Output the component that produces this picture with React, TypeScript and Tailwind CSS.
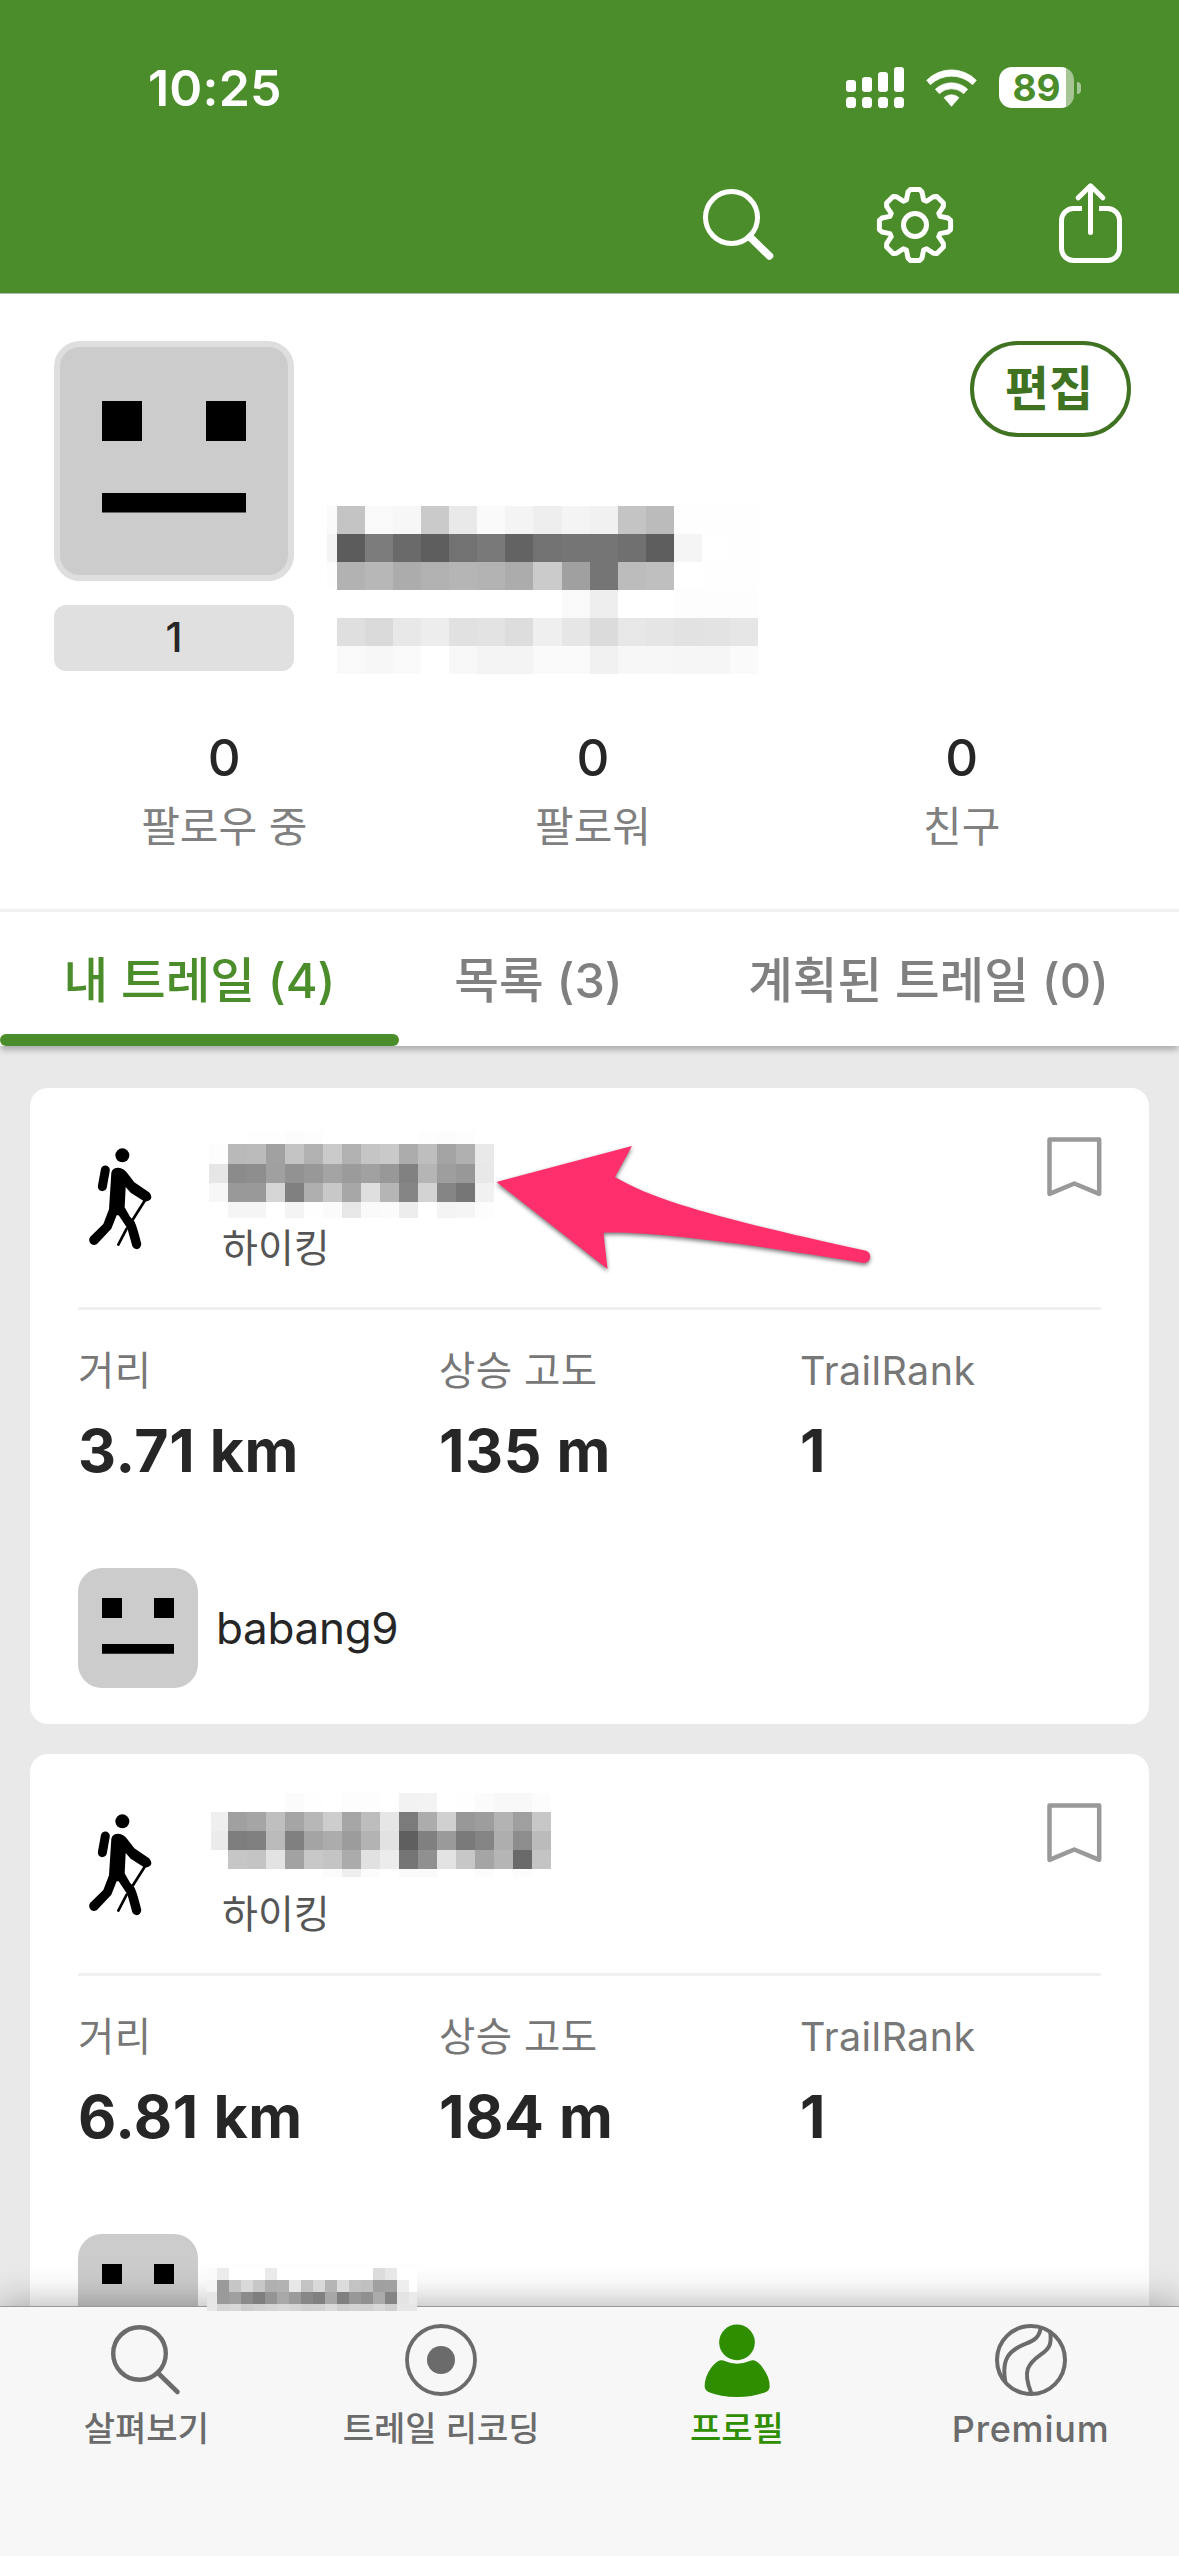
import React from 'react';
import clsx from 'clsx';

// --- Pixelated names ---
// Every cell is one grey level, written as two hex digits.
interface MosaicRow {
  height: number;
  cells: string;
}

interface MosaicProps {
  widths: number[];
  rows: MosaicRow[];
  className?: string;
}

const Mosaic: React.FC<MosaicProps> = ({ widths, rows, className }) => (
  <div className={className}>
    {rows.map((row, r) => (
      <div key={r} className="flex" style={{ height: row.height }}>
        {row.cells.split(' ').map((level, c) => (
          <div key={c} className="shrink-0" style={{ width: widths[c], backgroundColor: `#${level}${level}${level}` }} />
        ))}
      </div>
    ))}
  </div>
);

const repeat = (width: number, count: number) => Array<number>(count).fill(width);

const profileName = {
  widths: [10, ...repeat(28.07, 15)],
  rows: [
    { height: 28, cells: 'fa c4 f9 f7 ca e9 fa f4 ee f4 f1 c4 bb fe fe fe' },
    { height: 28, cells: 'f4 5c 7c 6a 5e 72 79 63 72 75 75 70 5e f5 ff fe' },
    { height: 28, cells: 'fd b2 b7 ac b1 b5 b3 ac cb a0 75 bc bf ff fe fe' },
    { height: 28, cells: 'ff ff ff ff ff ff ff ff ff f9 ee ff ff fd fd fd' },
    { height: 28, cells: 'ff df da e8 ed e1 e3 dd ef e6 db e7 e5 e2 e3 e6' },
    { height: 28, cells: 'ff f9 f7 fa ff f8 f4 f4 fa fa f1 f7 f7 f6 f6 fa' },
  ],
};

const firstTrailName = {
  widths: repeat(19, 15),
  rows: [
    { height: 13, cells: 'ff ff fe fe fc fd ff ff ff ff ff fd fc fd ff' },
    { height: 20, cells: 'fd b9 bb a1 c3 b1 ca b1 c5 c9 ac be a4 b0 e9' },
    { height: 19, cells: 'e6 8b 8e a0 92 98 a4 9b a1 98 81 b5 9e 98 e8' },
    { height: 19, cells: 'f7 99 99 d5 80 af c8 a7 df b5 85 d3 85 76 f1' },
    { height: 16, cells: 'ff f5 f5 ff f4 fe fb e7 fa fb ed ff f4 f5 fd' },
  ],
};

const secondTrailName = {
  widths: [17, ...repeat(19, 17)],
  rows: [
    { height: 19, cells: 'ff ff ff ff fb fe ff fd fd ff f2 f3 ff fe fb f8 f8 fc' },
    { height: 19, cells: 'ef a0 a5 bf a5 b7 cd a6 bd e6 7b ac d0 98 9d b3 9f c7' },
    { height: 19, cells: 'eb 7e 80 ba 80 a4 ac 9c b3 e2 5f 80 9a 7a 84 ae 8d bb' },
    { height: 19, cells: 'ff c6 c4 e3 a2 c8 c4 ab e1 ec 75 90 e3 c7 a5 b5 6a c4' },
    { height: 8, cells: 'ff ff ff ff ff ff fb ee fb ff fa fa ff ff fc ff fc ff' },
  ],
};

const authorName = {
  widths: [10, ...repeat(12, 16), 8],
  rows: [
    { height: 12, cells: 'fa eb ff ff ff ea ff ff ff ff ff ff ff ff dc e7 ff ff' },
    { height: 12, cells: 'f5 9a c6 d9 c7 b0 b2 e7 c3 d8 b5 dc c3 c0 a0 a1 ee ff' },
    { height: 12, cells: 'e6 9a a0 8b 7f 94 a8 9b 87 80 a7 80 98 90 ab 84 e4 ea' },
    { height: 7, cells: 'e7 d5 d8 cd d2 d5 d9 d5 d0 d1 da cf d3 d1 d8 cf e7 e7' },
  ],
};

// --- Icons ---
const SignalIcon: React.FC = () => (
  <svg width="58" height="41" viewBox="0 0 58 41" fill="currentColor">
    <rect x="0" y="13" width="10" height="12" rx="3.2" />
    <rect x="16" y="10" width="10" height="15" rx="3.2" />
    <rect x="32" y="5" width="10" height="20" rx="3.2" />
    <rect x="48" y="0" width="10" height="25" rx="3.2" />
    <rect x="0" y="30" width="10" height="11" rx="3.6" />
    <rect x="16" y="30" width="10" height="11" rx="3.6" />
    <rect x="32" y="30" width="10" height="11" rx="3.6" />
    <rect x="48" y="30" width="10" height="11" rx="3.6" />
  </svg>
);

const WifiIcon: React.FC = () => (
  <svg width="51" height="38" viewBox="288 40 153 114" fill="currentColor" stroke="currentColor" strokeWidth="2" strokeLinejoin="round">
    <path d="M290 74A104 104 0 0 1 439 74L428 87A92 92 0 0 0 301 87Z" />
    <path d="M316 101A70 70 0 0 1 413 101L401 114A53 53 0 0 0 328 114Z" />
    <path d="M342 126A33 33 0 0 1 387 126L364.500 152Z" />
  </svg>
);

const SearchIcon: React.FC<{ size: number; stroke: number; handle: number }> = ({ size, stroke, handle }) => (
  <svg width={size} height={size} viewBox="0 0 71 71" fill="none" stroke="currentColor">
    <circle cx="28.500" cy="28.500" r={28.5 - stroke / 2} strokeWidth={stroke} />
    <path d="M47 48L66.500 67" strokeWidth={handle} strokeLinecap="round" />
  </svg>
);

const gearPath = () => {
  const tooth = [[-8.6, -25], [-7, -33], [-4.6, -35.6], [4.6, -35.6], [7, -33], [8.6, -25]];
  const points = Array.from({ length: 8 }, (_, i) => {
    const a = (i * Math.PI) / 4;
    return tooth.map(([x, y]) => `${(x * Math.cos(a) - y * Math.sin(a)).toFixed(2)} ${(x * Math.sin(a) + y * Math.cos(a)).toFixed(2)}`);
  }).flat();
  return `M${points.join('L')}Z`;
};

const GearIcon: React.FC = () => (
  <svg width="78" height="78" viewBox="-39 -39 78 78" fill="none" stroke="currentColor" strokeWidth="5" strokeLinejoin="round">
    <path d={gearPath()} />
    <circle r="11.500" />
  </svg>
);

const ShareIcon: React.FC = () => (
  <svg width="63" height="80" viewBox="0 0 63 80" fill="none" stroke="currentColor" strokeWidth="5">
    <path d="M23 25.500H14.500A12 12 0 0 0 2.500 37.500V65.500A12 12 0 0 0 14.500 77.500H48.500A12 12 0 0 0 60.500 65.500V37.500A12 12 0 0 0 48.500 25.500H40" />
    <path d="M31.500 3V49.500M19.200 14.800L31.500 2.800L43.800 14.800" strokeLinecap="round" strokeLinejoin="round" />
  </svg>
);

const HikerIcon: React.FC = () => (
  <svg width="66" height="103" viewBox="77 81 198 309" fill="none" stroke="#000" strokeLinecap="round" strokeLinejoin="round">
    <circle cx="186" cy="106" r="21" fill="#000" stroke="none" />
    <path d="M135 150L126 200" strokeWidth="27" />
    <path d="M153 158Q156 143 174 143Q190 144 200 158L222 187L266 217Q277 227 271 238Q263 247 250 243L211 218L196 201L193 262L209 290L222 304Q230 320 243 372Q241 386 229 388Q219 386 216 379L201 325L175 286H169L153 326L110 372Q98 379 90 370Q83 359 90 350L129 312L146 268Z" fill="#000" stroke="none" />
    <path d="M256 238L218 298M199 326L174 374" strokeWidth="8" />
  </svg>
);

const BookmarkIcon: React.FC = () => (
  <svg width="55" height="60" viewBox="0 0 55 60" fill="none" stroke="#999999" strokeWidth="4.500" strokeLinejoin="round">
    <path d="M2.500 2.500H52.200V56.800L27.300 46.500L2.500 56.800Z" />
  </svg>
);

const RecordIcon: React.FC = () => (
  <svg width="72" height="72" viewBox="0 0 72 72" fill="none" stroke="currentColor" strokeWidth="3.800">
    <circle cx="36" cy="36" r="34" />
    <circle cx="36" cy="36" r="14" fill="currentColor" stroke="none" />
  </svg>
);

const PersonIcon: React.FC = () => (
  <svg width="66" height="74" viewBox="130 72 198 222" fill="currentColor">
    <circle cx="229" cy="130" r="53.500" />
    <path d="M180 184Q186 183 192 186Q229 202 267 186Q273 183 279 184Q291 186 306 206Q327 233 327 262Q327 274 316 279Q278 294 229 294Q180 294 143 279Q132 273 132 262Q132 233 151 207Q166 187 180 184Z" />
  </svg>
);

const PremiumIcon: React.FC = () => (
  <svg width="72" height="72" viewBox="1005 72 216 216" fill="none" stroke="currentColor" strokeWidth="12">
    <circle cx="1113" cy="180" r="102" />
    <path d="M1142 84C1138 112 1122 122 1098 131C1046 151 1024 178 1036 246" />
    <path d="M1171 98C1175 134 1168 146 1143 163C1105 190 1086 212 1114 280" />
  </svg>
);

const PointerArrow: React.FC = () => (
  <svg className="absolute left-[490px] top-[1140px] drop-shadow-[0_2px_2px_rgba(0,0,0,0.55)]" width="390" height="140" viewBox="490 1140 390 140">
    <path
      d="M496.500 1182L632 1146L615 1177C660 1204 745 1224 865 1250.500A6.300 6.300 0 0 1 864 1263C790 1251 665 1231 603.500 1232.700L607.500 1269Z"
      fill="#ff2f6c"
    />
  </svg>
);

// --- Avatars ---
const Face: React.FC<{ size: number }> = ({ size }) => (
  <svg width={size} height={size} viewBox="0 0 120 120" className="shrink-0">
    <path d="M24 30h20v20h-20zM76 30h20v20h-20zM24 76h72v9.800h-72z" fill="#000" />
  </svg>
);

// --- Sections ---
const StatusBar: React.FC = () => (
  <div className="flex h-[172px] pr-[98px] pl-[148px] text-white">
    <span className="mt-[56px] h-[64px] text-[50px] leading-[64px] font-semibold tracking-[0.2px]">10:25</span>
    <div className="mt-[67px] ml-auto flex h-[41px] items-center">
      <SignalIcon />
      <div className="ml-[22px]">
        <WifiIcon />
      </div>
      <div className="ml-[22px] flex h-[41px] w-[75px] items-center rounded-[13px] bg-linear-to-r from-white from-89% to-white/50 to-89%">
        <span className="w-full text-center text-[37px] leading-[41px] font-bold text-[#4b8d2a]">89</span>
      </div>
      <div className="ml-[3px] h-[12px] w-[4px] rounded-r-full bg-white/50" />
    </div>
  </div>
);

const Toolbar: React.FC = () => (
  <div className="flex h-[121px] items-start text-white">
    <div className="mt-[17px] ml-[703px]">
      <SearchIcon size={71} stroke={5} handle={7.5} />
    </div>
    <div className="mt-[14px] ml-[102px]">
      <GearIcon />
    </div>
    <div className="mt-[11px] ml-[105px]">
      <ShareIcon />
    </div>
  </div>
);

const followStats = [
  { value: 0, label: '팔로우 중' },
  { value: 0, label: '팔로워' },
  { value: 0, label: '친구' },
];

const ProfileSummary: React.FC = () => (
  <section className="h-[615px] shrink-0 pt-[47px]">
    <div className="flex items-start pr-[48px] pl-[54px]">
      <div className="w-[240px]">
        <div className="flex h-[240px] items-center justify-center rounded-[26px] border-[6px] border-[#dedede] bg-[#cccccc]">
          <Face size={240} />
        </div>
        <div className="mt-[24px] h-[66px] rounded-[12px] bg-[#e0e0e0] text-center text-[41px] leading-[65px] font-medium text-[#262626]">1</div>
      </div>
      <Mosaic {...profileName} className="mt-[165px] ml-[33px]" />
      <button className="ml-auto h-[96px] w-[161px] rounded-[50px] border-4 border-[#3f7321] pr-[3px] text-[48px] leading-[86px] font-bold text-[#3f7321]">
        편집
      </button>
    </div>
    <div className="mt-[54px] grid grid-cols-3 pr-[33px] pl-[40px] text-center">
      {followStats.map((stat) => (
        <div key={stat.label}>
          <div className="text-[51px] leading-[60px] font-medium text-[#262626]">{stat.value}</div>
          <div className="mt-[14px] text-[42px] leading-[50px] text-[#808080]">{stat.label}</div>
        </div>
      ))}
    </div>
  </section>
);

const listTabs = [
  { label: '내 트레일 (4)', width: 'w-[399px]', active: true },
  { label: '목록 (3)', width: 'w-[279px]', active: false },
  { label: '계획된 트레일 (0)', width: 'w-[501px]', active: false },
];

const ListTabs: React.FC = () => (
  <nav className="relative z-10 flex h-[137px] shrink-0 border-t-[3px] border-[#f0f0f0] bg-white shadow-[0_5px_6px_-1px_rgba(0,0,0,0.26)]">
    {listTabs.map((tab) => (
      <div key={tab.label} className={clsx('flex flex-col text-center text-[48.5px]', tab.width, tab.active ? 'text-[#4b8d2a]' : 'text-[#808080]')}>
        <span className="h-[122px] leading-[137px] font-medium whitespace-nowrap">{tab.label}</span>
        {tab.active && <span className="h-[12px] rounded-full bg-[#4b8d2a]" />}
      </div>
    ))}
  </nav>
);

interface Trail {
  id: number;
  name: React.ReactNode;
  distance: string;
  gain: string;
  rank: number;
  author?: string;
}

const trails: Trail[] = [
  { id: 1, name: <Mosaic {...firstTrailName} className="mt-[43px]" />, distance: '3.71 km', gain: '135 m', rank: 1, author: 'babang9' },
  { id: 2, name: <Mosaic {...secondTrailName} className="mt-[39px] ml-[2px]" />, distance: '6.81 km', gain: '184 m', rank: 1 },
];

const Metric: React.FC<{ label: string; value: React.ReactNode }> = ({ label, value }) => (
  <div className="w-[361px] shrink-0">
    <div className="text-[39.500px] leading-[48px] tracking-[0.4px] text-[#777777]">{label}</div>
    <div className="mt-[24px] text-[59px] leading-[64px] font-bold tracking-[0.6px] text-[#262626]">{value}</div>
  </div>
);

const TrailCard: React.FC<{ trail: Trail }> = ({ trail }) => (
  <article className="h-[636px] shrink-0 overflow-hidden rounded-[18px] bg-white px-[48px]">
    <div className="flex h-[219px] items-start">
      <div className="mt-[59px] ml-[8px]">
        <HikerIcon />
      </div>
      <div className="ml-[57px]">
        <div className="flex h-[139px]">{trail.name}</div>
        <div className="pl-[13px] text-[39px] leading-[41px] text-[#555555]">하이킹</div>
      </div>
      <div className="mt-[49px] -mr-[1px] ml-auto">
        <BookmarkIcon />
      </div>
    </div>
    <hr className="h-[3px] border-0 bg-[#f0f0f0]" />
    <div className="mt-[37px] flex">
      <Metric label="거리" value={trail.distance} />
      <Metric label="상승 고도" value={trail.gain} />
      <Metric label="TrailRank" value={trail.rank} />
    </div>
    <div className="mt-[85px] flex items-center">
      <div className="rounded-[24px] bg-[#cccccc]">
        <Face size={120} />
      </div>
      {trail.author && <span className="ml-[18px] text-[44px] leading-[60px] tracking-[-0.3px] text-[#262626]">{trail.author}</span>}
    </div>
  </article>
);

const bottomTabs = [
  { label: '살펴보기', icon: <SearchIcon size={71} stroke={4.4} handle={4.6} />, text: 'text-[34px]', active: false },
  { label: '트레일 리코딩', icon: <RecordIcon />, text: 'text-[34px]', active: false },
  { label: '프로필', icon: <PersonIcon />, text: 'text-[34px]', active: true },
  { label: 'Premium', icon: <PremiumIcon />, text: 'text-[36px] tracking-[0.8px]', active: false },
];

const BottomBar: React.FC = () => (
  <nav className="relative z-10 grid h-[250px] shrink-0 grid-cols-4 border-t border-[#999999] bg-[#f7f7f7] shadow-[0_0_36px_rgba(0,0,0,0.35)]">
    {bottomTabs.map((tab) => (
      <div key={tab.label} className={clsx('flex flex-col items-center pt-[16px]', tab.active ? 'text-[#2f8e00]' : 'pr-[2px] text-[#6b6b6b]')}>
        <div className="flex h-[74px] items-center">{tab.icon}</div>
        <span className={clsx('mt-[8px] leading-[48px] font-medium', tab.text)}>{tab.label}</span>
      </div>
    ))}
    <Mosaic {...authorName} className="absolute -top-[39px] left-[207px]" />
  </nav>
);

const App: React.FC = () => (
  <div className="relative flex h-[2556px] w-[1179px] flex-col overflow-hidden bg-white font-['Inter','Noto_Sans_CJK_KR',sans-serif]">
    <header className="h-[294px] shrink-0 border-b border-[#b5b5b5] bg-[#4b8d2a]">
      <StatusBar />
      <Toolbar />
    </header>
    <ProfileSummary />
    <ListTabs />
    <main className="flex min-h-0 flex-1 flex-col gap-[30px] overflow-hidden bg-[#e9e9e9] px-[30px] pt-[42px]">
      {trails.map((trail) => (
        <TrailCard key={trail.id} trail={trail} />
      ))}
    </main>
    <BottomBar />
    <PointerArrow />
  </div>
);

export default App;
